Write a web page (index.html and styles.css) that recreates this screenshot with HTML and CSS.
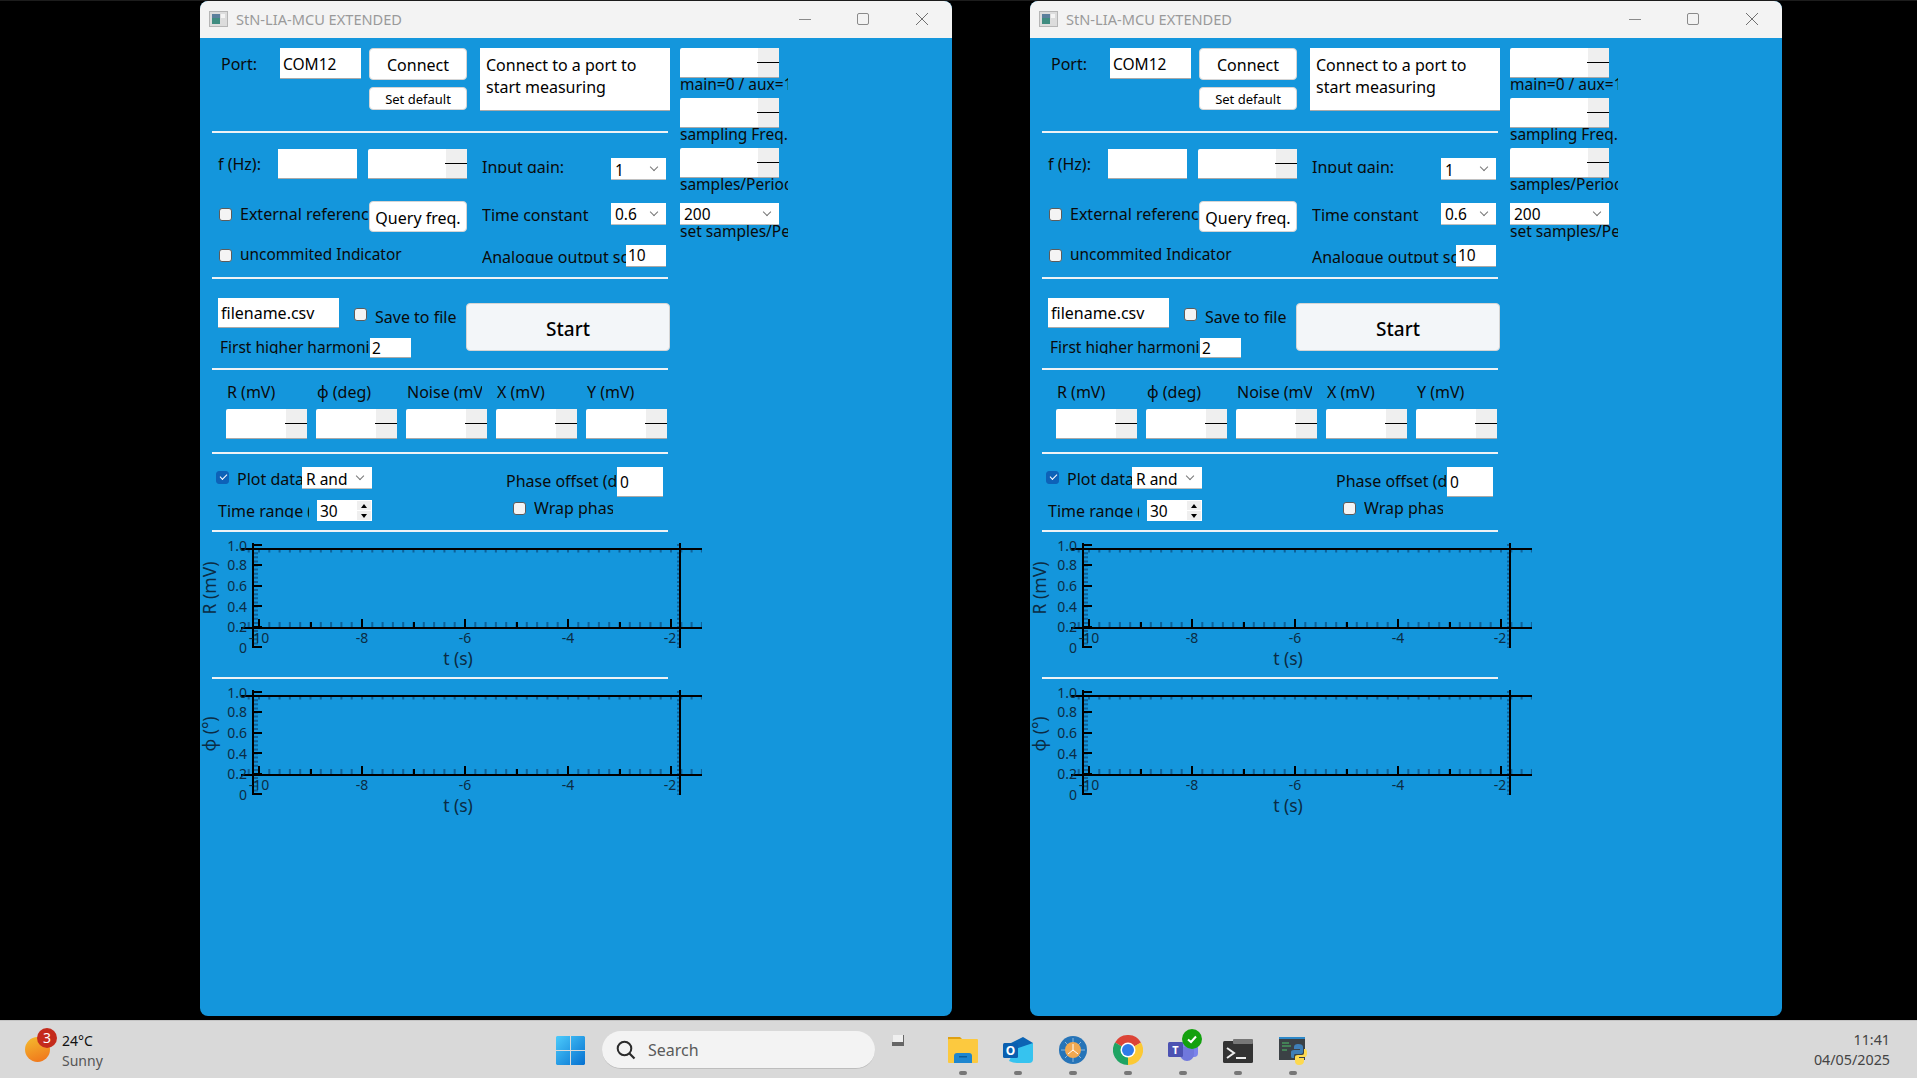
FILE: index.html
```html
<!DOCTYPE html>
<html lang="en">
<head>
    <meta charset="UTF-8">
    <title>StN-LIA-MCU EXTENDED</title>
    <link rel="stylesheet" href="styles.css">
</head>
<body>
    <svg class="defs" width="0" height="0">
        <symbol id="plot-axes" viewBox="0 0 520 145">
            <g class="minor">
                <line class="minor-x" x1="47.7" y1="93" x2="502" y2="93"></line>
                <line class="minor-top" x1="47.7" y1="19" x2="502" y2="19"></line>
                <line class="minor-y" x1="55.5" y1="12" x2="55.5" y2="116"></line>
                <line class="minor-right" x1="478.5" y1="12" x2="478.5" y2="116"></line>
            </g>
            <path class="axis" d="M41 17H502M41 96H502M53 11V116M480 11V116"></path>
            <path class="tick" d="M53 13H62M53 33H62M53 54H62M53 74H62M53 95H62M53 115H62M59 96V87M162 96V87M265 96V87M368 96V87M471 96V87M111 96V90M214 96V90M317 96V90M420 96V90"></path>
        </symbol>
        <symbol id="win-icon" viewBox="0 0 19 16">
            <rect x="0.5" y="0.5" width="18" height="15" fill="#dcdcdc" stroke="#b5b5b5"></rect>
            <rect x="3" y="3" width="8" height="10" fill="#3f8c80"></rect>
            <rect x="3" y="3" width="8" height="4" fill="#5b7f9c"></rect>
            <rect x="12" y="3" width="4" height="4" fill="#f4f4f4"></rect>
        </symbol>
    </svg>

    <div class="desktop">
        <div class="window">
            <div class="titlebar">
                <svg class="win-icon" width="19" height="16"><use href="#win-icon"></use></svg>
                <span class="title">StN-LIA-MCU EXTENDED</span>
                <span class="win-btn win-min"></span>
                <span class="win-btn win-max"></span>
                <span class="win-btn win-close">
                    <svg width="12" height="12"><path d="M0 0L12 12M12 0L0 12" stroke="#707070" fill="none"></path></svg>
                </span>
            </div>
            <div class="content">
                <div class="top">
                    <div class="main">
                        <div class="conn">
                            <div class="lbl port-lbl">Port:</div>
                            <div class="field com-field">COM12</div>
                            <div class="conn-btns">
                                <button class="btn">Connect</button>
                                <button class="btn btn-small">Set default</button>
                            </div>
                            <div class="msg">Connect to a port to start measuring</div>
                        </div>
                        <div class="rule"></div>
                        <div class="row row-freq">
                            <div class="lbl freq-lbl">f (Hz):</div>
                            <div class="field freq-field"></div>
                            <div class="lcd freq-lcd"><span class="lcd-bar"></span></div>
                            <div class="lbl right-lbl gain-lbl">Input gain:</div>
                            <div class="combo gain-combo">1</div>
                        </div>
                        <div class="row row-ref">
                            <div class="check-wrap ref-check"><span class="check"></span><span class="lbl">External reference</span></div>
                            <button class="btn query-btn">Query freq.</button>
                            <div class="lbl right-lbl tc-lbl">Time constant</div>
                            <div class="combo tc-combo">0.6</div>
                        </div>
                        <div class="row row-ind">
                            <div class="check-wrap ind-check"><span class="check"></span><span class="lbl">uncommited Indicator</span></div>
                            <div class="lbl analogue-lbl">Analogue output scale</div>
                            <div class="field small-field analogue-field">10</div>
                        </div>
                    </div>
                    <div class="side">
                        <div class="lcd side-lcd"><span class="lcd-bar"></span></div>
                        <div class="side-lbl">main=0 / aux=1</div>
                        <div class="lcd side-lcd"><span class="lcd-bar"></span></div>
                        <div class="side-lbl">sampling Freq.</div>
                        <div class="lcd side-lcd"><span class="lcd-bar"></span></div>
                        <div class="side-lbl">samples/Period</div>
                        <div class="combo side-combo">200</div>
                        <div class="side-lbl">set samples/Period</div>
                    </div>
                </div>
                <div class="rule"></div>
                <div class="file-row">
                    <div class="file-left">
                        <div class="file-line">
                            <div class="field file-field">filename.csv</div>
                            <div class="check-wrap save-check"><span class="check"></span><span class="lbl">Save to file</span></div>
                        </div>
                        <div class="harm-line">
                            <div class="lbl harm-lbl">First higher harmonic</div>
                            <div class="field small-field harm-field">2</div>
                        </div>
                    </div>
                    <button class="btn start-btn">Start</button>
                </div>
                <div class="rule"></div>
                <div class="readouts">
                    <div class="readout"><div class="lbl">R (mV)</div><div class="lcd"><span class="lcd-bar"></span></div></div>
                    <div class="readout"><div class="lbl">φ (deg)</div><div class="lcd"><span class="lcd-bar"></span></div></div>
                    <div class="readout"><div class="lbl">Noise (mV)</div><div class="lcd"><span class="lcd-bar"></span></div></div>
                    <div class="readout"><div class="lbl">X (mV)</div><div class="lcd"><span class="lcd-bar"></span></div></div>
                    <div class="readout"><div class="lbl">Y (mV)</div><div class="lcd"><span class="lcd-bar"></span></div></div>
                </div>
                <div class="rule"></div>
                <div class="plot-ctl">
                    <div class="ctl-left">
                        <div class="ctl-line">
                            <div class="check-wrap plot-check"><span class="check checked"></span><span class="lbl">Plot data</span></div>
                            <div class="combo plot-combo">R and φ</div>
                        </div>
                        <div class="ctl-line range-line">
                            <div class="lbl range-lbl">Time range (s)</div>
                            <div class="spin">30<span class="spin-btns"><i class="up"></i><i class="down"></i></span></div>
                        </div>
                    </div>
                    <div class="ctl-right">
                        <div class="ctl-line">
                            <div class="lbl phase-lbl">Phase offset (deg)</div>
                            <div class="field phase-field">0</div>
                        </div>
                        <div class="check-wrap wrap-check"><span class="check"></span><span class="lbl">Wrap phase</span></div>
                    </div>
                </div>
                <div class="rule"></div>
                <svg class="plot" width="520" height="145" viewBox="0 0 520 145">
                    <use href="#plot-axes"></use>
                    <g class="ylabels"><text x="47" y="19">1.0</text><text x="47" y="38">0.8</text><text x="47" y="59">0.6</text><text x="47" y="80">0.4</text><text x="47" y="100">0.2</text><text x="47" y="121">0</text></g>
                    <g class="xlabels"><text x="59" y="111">-10</text><text x="162" y="111">-8</text><text x="265" y="111">-6</text><text x="368" y="111">-4</text><text x="470" y="111">-2</text></g>
                    <text class="xtitle" x="258" y="133">t (s)</text>
                    <text class="ytitle" transform="translate(16 56) rotate(-90)">R (mV)</text>
                </svg>
                <div class="rule"></div>
                <svg class="plot" width="520" height="145" viewBox="0 0 520 145">
                    <use href="#plot-axes"></use>
                    <g class="ylabels"><text x="47" y="19">1.0</text><text x="47" y="38">0.8</text><text x="47" y="59">0.6</text><text x="47" y="80">0.4</text><text x="47" y="100">0.2</text><text x="47" y="121">0</text></g>
                    <g class="xlabels"><text x="59" y="111">-10</text><text x="162" y="111">-8</text><text x="265" y="111">-6</text><text x="368" y="111">-4</text><text x="470" y="111">-2</text></g>
                    <text class="xtitle" x="258" y="133">t (s)</text>
                    <text class="ytitle" transform="translate(16 55) rotate(-90)">φ (°)</text>
                </svg>
            </div>
        </div>

        <div class="window">
            <div class="titlebar">
                <svg class="win-icon" width="19" height="16"><use href="#win-icon"></use></svg>
                <span class="title">StN-LIA-MCU EXTENDED</span>
                <span class="win-btn win-min"></span>
                <span class="win-btn win-max"></span>
                <span class="win-btn win-close">
                    <svg width="12" height="12"><path d="M0 0L12 12M12 0L0 12" stroke="#707070" fill="none"></path></svg>
                </span>
            </div>
            <div class="content">
                <div class="top">
                    <div class="main">
                        <div class="conn">
                            <div class="lbl port-lbl">Port:</div>
                            <div class="field com-field">COM12</div>
                            <div class="conn-btns">
                                <button class="btn">Connect</button>
                                <button class="btn btn-small">Set default</button>
                            </div>
                            <div class="msg">Connect to a port to start measuring</div>
                        </div>
                        <div class="rule"></div>
                        <div class="row row-freq">
                            <div class="lbl freq-lbl">f (Hz):</div>
                            <div class="field freq-field"></div>
                            <div class="lcd freq-lcd"><span class="lcd-bar"></span></div>
                            <div class="lbl right-lbl gain-lbl">Input gain:</div>
                            <div class="combo gain-combo">1</div>
                        </div>
                        <div class="row row-ref">
                            <div class="check-wrap ref-check"><span class="check"></span><span class="lbl">External reference</span></div>
                            <button class="btn query-btn">Query freq.</button>
                            <div class="lbl right-lbl tc-lbl">Time constant</div>
                            <div class="combo tc-combo">0.6</div>
                        </div>
                        <div class="row row-ind">
                            <div class="check-wrap ind-check"><span class="check"></span><span class="lbl">uncommited Indicator</span></div>
                            <div class="lbl analogue-lbl">Analogue output scale</div>
                            <div class="field small-field analogue-field">10</div>
                        </div>
                    </div>
                    <div class="side">
                        <div class="lcd side-lcd"><span class="lcd-bar"></span></div>
                        <div class="side-lbl">main=0 / aux=1</div>
                        <div class="lcd side-lcd"><span class="lcd-bar"></span></div>
                        <div class="side-lbl">sampling Freq.</div>
                        <div class="lcd side-lcd"><span class="lcd-bar"></span></div>
                        <div class="side-lbl">samples/Period</div>
                        <div class="combo side-combo">200</div>
                        <div class="side-lbl">set samples/Period</div>
                    </div>
                </div>
                <div class="rule"></div>
                <div class="file-row">
                    <div class="file-left">
                        <div class="file-line">
                            <div class="field file-field">filename.csv</div>
                            <div class="check-wrap save-check"><span class="check"></span><span class="lbl">Save to file</span></div>
                        </div>
                        <div class="harm-line">
                            <div class="lbl harm-lbl">First higher harmonic</div>
                            <div class="field small-field harm-field">2</div>
                        </div>
                    </div>
                    <button class="btn start-btn">Start</button>
                </div>
                <div class="rule"></div>
                <div class="readouts">
                    <div class="readout"><div class="lbl">R (mV)</div><div class="lcd"><span class="lcd-bar"></span></div></div>
                    <div class="readout"><div class="lbl">φ (deg)</div><div class="lcd"><span class="lcd-bar"></span></div></div>
                    <div class="readout"><div class="lbl">Noise (mV)</div><div class="lcd"><span class="lcd-bar"></span></div></div>
                    <div class="readout"><div class="lbl">X (mV)</div><div class="lcd"><span class="lcd-bar"></span></div></div>
                    <div class="readout"><div class="lbl">Y (mV)</div><div class="lcd"><span class="lcd-bar"></span></div></div>
                </div>
                <div class="rule"></div>
                <div class="plot-ctl">
                    <div class="ctl-left">
                        <div class="ctl-line">
                            <div class="check-wrap plot-check"><span class="check checked"></span><span class="lbl">Plot data</span></div>
                            <div class="combo plot-combo">R and φ</div>
                        </div>
                        <div class="ctl-line range-line">
                            <div class="lbl range-lbl">Time range (s)</div>
                            <div class="spin">30<span class="spin-btns"><i class="up"></i><i class="down"></i></span></div>
                        </div>
                    </div>
                    <div class="ctl-right">
                        <div class="ctl-line">
                            <div class="lbl phase-lbl">Phase offset (deg)</div>
                            <div class="field phase-field">0</div>
                        </div>
                        <div class="check-wrap wrap-check"><span class="check"></span><span class="lbl">Wrap phase</span></div>
                    </div>
                </div>
                <div class="rule"></div>
                <svg class="plot" width="520" height="145" viewBox="0 0 520 145">
                    <use href="#plot-axes"></use>
                    <g class="ylabels"><text x="47" y="19">1.0</text><text x="47" y="38">0.8</text><text x="47" y="59">0.6</text><text x="47" y="80">0.4</text><text x="47" y="100">0.2</text><text x="47" y="121">0</text></g>
                    <g class="xlabels"><text x="59" y="111">-10</text><text x="162" y="111">-8</text><text x="265" y="111">-6</text><text x="368" y="111">-4</text><text x="470" y="111">-2</text></g>
                    <text class="xtitle" x="258" y="133">t (s)</text>
                    <text class="ytitle" transform="translate(16 56) rotate(-90)">R (mV)</text>
                </svg>
                <div class="rule"></div>
                <svg class="plot" width="520" height="145" viewBox="0 0 520 145">
                    <use href="#plot-axes"></use>
                    <g class="ylabels"><text x="47" y="19">1.0</text><text x="47" y="38">0.8</text><text x="47" y="59">0.6</text><text x="47" y="80">0.4</text><text x="47" y="100">0.2</text><text x="47" y="121">0</text></g>
                    <g class="xlabels"><text x="59" y="111">-10</text><text x="162" y="111">-8</text><text x="265" y="111">-6</text><text x="368" y="111">-4</text><text x="470" y="111">-2</text></g>
                    <text class="xtitle" x="258" y="133">t (s)</text>
                    <text class="ytitle" transform="translate(16 55) rotate(-90)">φ (°)</text>
                </svg>
            </div>
        </div>
    </div>

    <div class="taskbar">
        <div class="weather">
            <span class="sun"></span>
            <span class="badge">3</span>
            <div class="weather-text">
                <div class="temp">24°C</div>
                <div class="cond">Sunny</div>
            </div>
        </div>
        <svg class="start" width="29" height="29" viewBox="0 0 29 29">
            <defs>
                <linearGradient id="start-grad" x1="0" y1="0" x2="1" y2="1">
                    <stop offset="0" stop-color="#4ccbfb"></stop>
                    <stop offset="1" stop-color="#0570d0"></stop>
                </linearGradient>
            </defs>
            <path d="M1 0H14V14H0V1ZM15 0H28L29 1V14H15ZM0 15H14V29H1L0 28ZM15 15H29V28L28 29H15Z" fill="url(#start-grad)"></path>
        </svg>
        <div class="search">
            <svg width="20" height="20" viewBox="0 0 20 20">
                <circle cx="8.5" cy="8.5" r="6.8" fill="none" stroke="#2b2b2b" stroke-width="2"></circle>
                <path d="M13.5 13.5L18.5 18.5" stroke="#2b2b2b" stroke-width="2.2"></path>
            </svg>
            <span>Search</span>
        </div>
        <svg class="widget" width="12" height="11" viewBox="0 0 12 11">
            <path d="M1 0H11V7H1Z" fill="#efefef"></path>
            <path d="M11 0H12V9H11ZM0 7H12V11H0Z" fill="#666"></path>
        </svg>
        <div class="apps">
            <div class="app">
                <svg width="30" height="30" viewBox="0 0 30 30">
                    <path d="M0 2H12L15 5H0Z" fill="#dfa012"></path>
                    <rect y="4" width="30" height="24" rx="1" fill="#fcc93f"></rect>
                    <path d="M6 28V21Q6 18 9 18H21Q24 18 24 21V28Z" fill="#1e86cf"></path>
                    <rect x="11" y="21" width="8" height="1.5" fill="#0c5d99"></rect>
                </svg>
                <span class="dot"></span>
            </div>
            <div class="app">
                <svg width="30" height="30" viewBox="0 0 30 30">
                    <path d="M6 9L20 2L30 8V16L12 22Z" fill="#0c64b4"></path>
                    <path d="M12 14L30 8V24Q30 28 26 28H14Q10 28 6 26Z" fill="#36c3ef"></path>
                    <rect y="8" width="15" height="15" rx="1.5" fill="#0a5fb0"></rect>
                    <text class="app-letter" x="7.5" y="20" font-size="12">O</text>
                </svg>
                <span class="dot"></span>
            </div>
            <div class="app">
                <svg width="30" height="30" viewBox="0 0 30 30">
                    <circle cx="15" cy="15" r="14" fill="#2674b8"></circle>
                    <path d="M15 3V27M3 15H27M7 7L23 23M23 7L7 23" stroke="#d4e6f4" stroke-width="0.6"></path>
                    <circle cx="15" cy="15" r="8" fill="#f0a851"></circle>
                    <path d="M15 9V15L10 19M15 15L20 19" stroke="#fff" stroke-width="1" fill="none"></path>
                </svg>
                <span class="dot"></span>
            </div>
            <div class="app">
                <svg width="30" height="30" viewBox="0 0 30 30">
                    <path d="M15 15L2 7.5A15 15 0 0 1 28 7.5Z" fill="#dc4437"></path>
                    <path d="M15 15L2 7.5A15 15 0 0 0 15 30Z" fill="#1fa463"></path>
                    <path d="M15 15L28 7.5A15 15 0 0 1 15 30Z" fill="#fcc934"></path>
                    <circle cx="15" cy="15" r="7.5" fill="#fff"></circle>
                    <circle cx="15" cy="15" r="6" fill="#2f7be8"></circle>
                </svg>
                <span class="dot"></span>
            </div>
            <div class="app">
                <svg width="30" height="30" viewBox="0 0 30 30">
                    <circle cx="21" cy="8" r="5" fill="#6a70c9"></circle>
                    <rect x="12" y="7" width="18" height="15" rx="4" fill="#7b83eb"></rect>
                    <path d="M12 12H26V19A7 7 0 0 1 12 19Z" fill="#7078dc"></path>
                    <rect y="7" width="15" height="15" rx="1.5" fill="#4c52b2"></rect>
                    <text class="app-letter" x="7.5" y="19" font-size="11">T</text>
                </svg>
                <span class="dot"></span>
                <span class="teams-ok">
                    <svg width="20" height="20" viewBox="0 0 20 20">
                        <circle cx="10" cy="10" r="10" fill="#13a10e"></circle>
                        <path d="M6 10.5L9 13L14 7.5" stroke="#fff" stroke-width="2" fill="none"></path>
                    </svg>
                </span>
            </div>
            <div class="app">
                <svg width="30" height="30" viewBox="0 0 30 30">
                    <rect y="6" width="30" height="22" rx="1.5" fill="#333"></rect>
                    <rect x="10" y="4" width="20" height="5" rx="1" fill="#777"></rect>
                    <path d="M4 13L11 18L4 23" stroke="#eee" stroke-width="2" fill="none"></path>
                    <rect x="13" y="22" width="10" height="2" fill="#eee"></rect>
                </svg>
                <span class="dot"></span>
            </div>
            <div class="app">
                <svg width="30" height="30" viewBox="0 0 30 30">
                    <rect x="1" y="2" width="26" height="23" fill="#3b4145"></rect>
                    <rect x="1" y="2" width="26" height="2" fill="#2d88c8"></rect>
                    <path d="M4 8H11M4 11H13M4 15H9" stroke="#4ec36b" stroke-width="1"></path>
                    <path d="M13 21V17Q13 15 16 15H22V14H16V12Q16 9 20 9Q25 9 25 12V17Q25 19 22 19H17Q16 19 16 21V23H14Q13 23 13 21Z" fill="#3f7fb7"></path>
                    <path d="M26 14H27Q29 14 29 18Q29 22 27 22H21V23H26V26Q26 30 21 30Q17 30 17 26V22Q17 20 20 20H24Q26 20 26 18Z" fill="#fdd94f"></path>
                </svg>
                <span class="dot"></span>
            </div>
        </div>
        <div class="clock">
            <div>11:41</div>
            <div>04/05/2025</div>
        </div>
    </div>
</body>
</html>
```

FILE: styles.css
```css
* {
    box-sizing: border-box;
}
body {
    margin: 0;
    width: 1917px;
    height: 1078px;
    overflow: hidden;
    background-color: #000;
    font-family: "Noto Sans", sans-serif;
    font-size: 16px;
    color: #0a0a0a;
}
.defs {
    position: absolute;
}
.desktop {
    display: flex;
    gap: 78px;
    height: 1020px;
    padding: 1px 0 0 200px;
    background-color: #000;
    border-top: 1px solid #1c1c1c;
}
.window {
    width: 752px;
    height: 1015px;
    margin-top: -1px;
    border-radius: 8px;
    overflow: hidden;
    background-color: #1496dc;
}
.titlebar {
    display: flex;
    align-items: center;
    height: 37px;
    padding: 0 0 1px 9px;
    background-color: #f3f3f3;
}
.win-icon {
    margin-right: 8px;
}
.title {
    flex: 1;
    padding-bottom: 1px;
    font-size: 14.6px;
    color: #9a9a9a;
}
.win-btn {
    display: block;
    width: 12px;
    height: 12px;
    margin-right: 46px;
}
.win-min {
    border-bottom: 1px solid #8a8a8a;
    height: 7px;
    margin-bottom: 5px;
}
.win-max {
    margin-right: 47px;
    border: 1px solid #8a8a8a;
    border-radius: 2px;
}
.win-close {
    margin-right: 24px;
}
.win-close svg {
    display: block;
}
.content {
    padding: 10px 0 0 12px;
}
.lbl {
    line-height: 20px;
    white-space: nowrap;
    overflow: hidden;
}
.rule {
    width: 456px;
    height: 2px;
    background-color: #eef3f6;
}
.field {
    flex-shrink: 0;
    padding-left: 3px;
    background-color: #fff;
    border-bottom: 1px solid #a9a9a9;
    font-size: 15.5px;
    line-height: 31px;
    color: #000;
}
.small-field {
    line-height: 21px;
    padding-left: 2px;
}
.btn {
    flex-shrink: 0;
    padding: 2px 0 0;
    font-family: inherit;
    font-size: 16px;
    color: #000;
    background-color: #fff;
    border: 1px solid #d5d5d5;
    border-radius: 4px;
}
.lcd {
    display: flex;
    justify-content: flex-end;
    flex-shrink: 0;
    height: 30px;
    background-color: #fff;
    border-radius: 2px 2px 0 0;
    border-bottom: 1px solid #a9a9a9;
}
.lcd-bar {
    position: relative;
    width: 21px;
    background-color: #efefef;
}
.lcd-bar::after {
    content: "";
    position: absolute;
    left: -1px;
    right: 0;
    top: 14px;
    height: 1px;
    background-color: #000;
}
.combo {
    position: relative;
    flex-shrink: 0;
    height: 22px;
    padding-left: 4px;
    background-color: #fff;
    border-bottom: 1px solid #c0c0c0;
    font-size: 15.5px;
    line-height: 22px;
    white-space: nowrap;
    overflow: hidden;
    color: #000;
}
.combo::before {
    content: "";
    position: absolute;
    right: 0;
    top: 0;
    width: 22px;
    height: 100%;
    background-color: #fff;
}
.combo::after {
    content: "";
    position: absolute;
    right: 9px;
    top: 6px;
    width: 5px;
    height: 5px;
    border-right: 1px solid #777;
    border-bottom: 1px solid #777;
    transform: rotate(45deg);
}
.check-wrap {
    display: flex;
    align-items: flex-start;
    flex-shrink: 0;
    overflow: hidden;
}
.check-wrap .lbl {
    margin-top: -4px;
}
.check {
    position: relative;
    flex-shrink: 0;
    width: 13px;
    height: 13px;
    margin-right: 8px;
    background-color: #f4f4f4;
    border: 1px solid #5c5c5c;
    border-radius: 3px;
}
.checked {
    background-color: #0d62b8;
    border-color: #0d62b8;
}
.checked::after {
    content: "";
    position: absolute;
    left: 3px;
    top: 2px;
    width: 6px;
    height: 3px;
    border-left: 1px solid #fff;
    border-bottom: 1px solid #fff;
    transform: rotate(-45deg);
}

/* top block */
.top {
    display: flex;
    gap: 12px;
}
.main {
    width: 456px;
    flex-shrink: 0;
}
.side {
    width: 108px;
    overflow: hidden;
}
.side-lcd {
    width: 99px;
}
.side-lbl {
    height: 21px;
    margin-top: -1px;
    font-size: 15.5px;
    line-height: 14px;
    white-space: nowrap;
}
.side-combo {
    width: 99px;
    margin-top: 5px;
}
.side-combo + .side-lbl {
    height: 15px;
}
.conn {
    display: flex;
    height: 83px;
}
.port-lbl {
    flex-shrink: 0;
    width: 68px;
    padding-left: 9px;
    padding-top: 6px;
}
.com-field {
    width: 81px;
    height: 31px;
    margin-right: 8px;
    line-height: 32px;
}
.conn-btns {
    display: flex;
    flex-direction: column;
    flex-shrink: 0;
    gap: 7px;
    width: 98px;
}
.conn-btns .btn {
    height: 32px;
}
.conn-btns .btn-small {
    height: 23px;
    padding-top: 0;
    font-size: 13px;
}
.msg {
    flex-shrink: 0;
    width: 190px;
    height: 63px;
    margin-left: 13px;
    padding: 6px 6px;
    background-color: #fff;
    border-bottom: 1px solid #a9a9a9;
    line-height: 22px;
    color: #000;
}
.row {
    display: flex;
    align-items: flex-start;
}
.row-freq {
    height: 52px;
    margin-top: 16px;
}
.row-ref {
    height: 44px;
}
.row-ind {
    height: 32px;
}
.freq-lbl {
    width: 66px;
    padding-left: 6px;
    padding-top: 5px;
    flex-shrink: 0;
}
.freq-field {
    width: 79px;
    height: 30px;
}
.freq-lcd {
    width: 99px;
    margin-left: 11px;
}
.right-lbl {
    flex-shrink: 0;
    width: 129px;
    margin-left: 15px;
}
.gain-lbl {
    height: 16px;
    margin-top: 8px;
}
.gain-combo,
.tc-combo {
    width: 55px;
}
.gain-combo {
    margin-top: 9px;
    line-height: 24px;
}
.tc-combo {
    margin-top: 2px;
}
.tc-lbl {
    margin-top: 4px;
}
.ref-check {
    width: 157px;
    padding: 7px 0 0 7px;
}
.query-btn {
    width: 98px;
    height: 31px;
}
.ind-check {
    width: 270px;
    padding: 4px 0 0 7px;
}
.ind-check .lbl {
    font-size: 15.4px;
}
.analogue-lbl {
    flex-shrink: 0;
    width: 144px;
    height: 16px;
    margin-top: 2px;
}
.analogue-field {
    width: 40px;
    height: 22px;
}

/* file row */
.file-row {
    display: flex;
    height: 89px;
    padding-top: 19px;
}
.file-left {
    width: 254px;
    flex-shrink: 0;
}
.file-line {
    display: flex;
    height: 40px;
}
.file-field {
    width: 121px;
    height: 30px;
    margin-left: 6px;
    font-size: 16px;
}
.save-check {
    margin-left: 15px;
    padding-top: 10px;
}
.save-check .lbl {
    margin-top: -1px;
}
.harm-line {
    display: flex;
}
.harm-lbl {
    flex-shrink: 0;
    width: 158px;
    height: 16px;
    padding-left: 8px;
    font-size: 15.5px;
    line-height: 18px;
}
.harm-field {
    width: 41px;
    height: 20px;
    line-height: 20px;
}
.start-btn {
    width: 204px;
    height: 48px;
    margin-top: 5px;
    padding-top: 3px;
    background-color: #f3f6f9;
    font-size: 19px;
    font-weight: 500;
}

/* readouts */
.readouts {
    display: grid;
    grid-template-columns: repeat(5, 81px);
    gap: 9px;
    height: 82px;
    padding: 12px 0 0 14px;
}
.readout .lbl {
    width: 76px;
    height: 27px;
    padding-left: 1px;
}

/* plot controls */
.plot-ctl {
    display: flex;
    height: 76px;
    padding-top: 13px;
}
.ctl-left {
    width: 294px;
    flex-shrink: 0;
}
.ctl-right {
    width: 157px;
}
.ctl-line {
    display: flex;
}
.plot-check {
    width: 90px;
    padding: 4px 0 0 4px;
}
.plot-check .lbl {
    margin-top: -2px;
}
.plot-combo {
    width: 70px;
    line-height: 24px;
}
.range-line {
    margin-top: 11px;
}
.range-lbl {
    flex-shrink: 0;
    width: 97px;
    height: 18px;
    padding-left: 6px;
    margin-right: 8px;
    line-height: 23px;
}
.spin {
    position: relative;
    width: 55px;
    height: 21px;
    padding-left: 3px;
    background-color: #fff;
    font-size: 15.5px;
    line-height: 22px;
    color: #000;
}
.spin-btns {
    position: absolute;
    right: 0;
    top: 1px;
    display: flex;
    flex-direction: column;
    gap: 1px;
    width: 16px;
    padding: 0 1px;
}
.spin-btns i {
    display: flex;
    justify-content: center;
    align-items: center;
    height: 9px;
    background-color: #efefef;
}
.spin-btns i::after {
    content: "";
    border-left: 3px solid transparent;
    border-right: 3px solid transparent;
}
.spin-btns .up::after {
    border-bottom: 4px solid #000;
}
.spin-btns .down::after {
    border-top: 4px solid #000;
}
.phase-lbl {
    flex-shrink: 0;
    width: 110px;
    height: 22px;
    margin-top: 4px;
    margin-right: 1px;
}
.phase-field {
    width: 46px;
    height: 30px;
}
.wrap-check {
    width: 100px;
    margin: 5px 0 0 7px;
}

/* plots */
.plot {
    display: block;
    margin-left: -12px;
}
.axis {
    fill: none;
    stroke: #000;
    stroke-width: 2;
}
.tick {
    fill: none;
    stroke: #000;
    stroke-width: 2;
}
.minor line {
    stroke: #0f6299;
    fill: none;
}
.minor-x {
    stroke-width: 6;
    stroke-dasharray: 2 8.3;
}
.minor-top {
    stroke-width: 3;
    stroke-dasharray: 2 8.3;
}
.minor-y {
    stroke-width: 5;
    stroke-dasharray: 2 2.1;
}
.minor-right {
    stroke-width: 3;
    stroke-dasharray: 2 2.1;
}
.ylabels text,
.xlabels text,
.xtitle,
.ytitle {
    font-family: "Noto Sans", sans-serif;
    font-size: 14px;
    fill: #0b2c44;
}
.ylabels text {
    text-anchor: end;
}
.xlabels text,
.xtitle,
.ytitle {
    text-anchor: middle;
}
.xtitle,
.ytitle {
    font-size: 17.5px;
}

/* taskbar */
.taskbar {
    display: flex;
    align-items: flex-start;
    height: 58px;
    padding-right: 27px;
    background-color: #d9d9d9;
    border-top: 1px solid #c4c4c4;
}
.weather {
    position: relative;
    display: flex;
    width: 556px;
    padding: 16px 0 0 25px;
}
.sun {
    width: 25px;
    height: 25px;
    border-radius: 50%;
    background: linear-gradient(160deg, #f4bd2f, #f0701a);
}
.badge {
    position: absolute;
    left: 37px;
    top: 7px;
    width: 20px;
    height: 20px;
    border-radius: 50%;
    background-color: #c42b1c;
    color: #fff;
    font-size: 14px;
    line-height: 20px;
    text-align: center;
}
.weather-text {
    margin-left: 12px;
    margin-top: -6px;
    font-size: 14px;
    line-height: 20px;
}
.temp {
    color: #111;
}
.cond {
    color: #555;
}
.start {
    margin-top: 15px;
}
.search {
    display: flex;
    align-items: center;
    gap: 12px;
    width: 273px;
    height: 38px;
    margin: 10px 0 0 17px;
    padding-left: 14px;
    background-color: #f3f3f3;
    border-bottom: 1px solid #bdbdbd;
    border-radius: 19px;
    font-size: 16px;
    color: #5a5a5a;
}
.widget {
    margin: 14px 0 0 17px;
}
.apps {
    display: flex;
    margin-left: 31px;
}
.app {
    position: relative;
    display: flex;
    flex-direction: column;
    align-items: center;
    width: 55px;
    padding-top: 14px;
}
.app svg {
    display: block;
}
.app-letter {
    font-family: "Noto Sans", sans-serif;
    font-weight: 700;
    fill: #fff;
    text-anchor: middle;
}
.dot {
    width: 8px;
    height: 4px;
    margin-top: 6px;
    border-radius: 2px;
    background-color: #777;
}
.teams-ok {
    position: absolute;
    left: 27px;
    top: 8px;
}
.clock {
    margin-left: auto;
    padding-top: 9px;
    font-size: 14.3px;
    line-height: 20px;
    text-align: right;
    color: #444;
}
```
